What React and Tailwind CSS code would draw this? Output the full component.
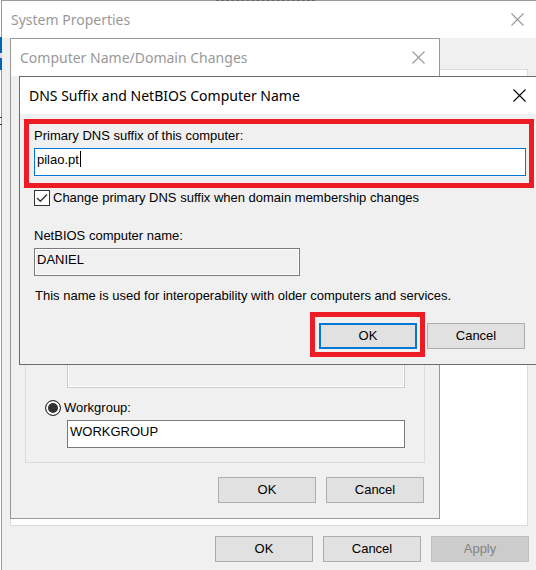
import React from "react";

const uiFont = "font-['Liberation_Sans',Arial,sans-serif]";

function CloseButton({ className = "" }) {
  return (
    <button type="button" aria-label="Close" className={`flex size-4 items-center justify-center ${className}`}>
      <svg width="13" height="13" viewBox="0 0 13 13" fill="none" stroke="currentColor" strokeWidth="1.1">
        <path d="M0.5 0.5 12.5 12.5M12.5 0.5 0.5 12.5" />
      </svg>
    </button>
  );
}

function TitleBar({ title, className = "" }) {
  return (
    <header className={`flex h-[37px] shrink-0 items-center justify-between bg-white pl-[9px] font-['Noto_Sans','Open_Sans',sans-serif] text-[14px] ${className}`}>
      <h2 className="whitespace-nowrap">{title}</h2>
      <CloseButton />
    </header>
  );
}

function DialogButton({ children, className = "border border-[#adadad] bg-[#e1e1e1]", disabled = false }) {
  return (
    <button type="button" disabled={disabled} className={`h-[26px] w-[98px] shrink-0 ${className}`}>
      {children}
    </button>
  );
}

function ComputerNameDialog() {
  return (
    <section className="absolute top-[38px] left-[10px] flex h-[481px] w-[430px] flex-col border border-[#999999] bg-[#f0f0f0]">
      <TitleBar title="Computer Name/Domain Changes" className="pr-[13px] text-[#999999]" />
      <div className="flex grow flex-col px-[14px] pb-[15px]">
        <fieldset className="flex grow flex-col justify-end border border-t-0 border-[#dcdcdc] px-[19px] pb-[14px]">
          <input disabled aria-label="Domain" className="ml-[22px] h-7 border border-[#cccccc] bg-[#f0f0f0] shadow-[inset_0_0_0_1px_#ffffff]" />
          <label className="mt-3 flex h-4 items-center gap-[3px]">
            <input
              type="radio"
              name="member"
              defaultChecked
              className="size-4 appearance-none rounded-full border border-[#333333] bg-[#333333] shadow-[inset_0_0_0_2px_#ffffff]"
            />
            Workgroup:
          </label>
          <input
            aria-label="Workgroup name"
            defaultValue="WORKGROUP"
            className="mt-1 ml-[22px] h-7 border border-[#7a7a7a] bg-white px-[2px] pb-[5px]"
          />
        </fieldset>
        <div className="mt-[14px] flex justify-end gap-[10px] pr-px">
          <DialogButton>OK</DialogButton>
          <DialogButton>Cancel</DialogButton>
        </div>
      </div>
    </section>
  );
}

function DnsSuffixDialog() {
  return (
    <section className="absolute top-[76px] right-0 left-[19px] border border-r-0 border-[#6b6b6b] bg-[#f0f0f0]">
      <TitleBar title="DNS Suffix and NetBIOS Computer Name" className="pr-[9px] text-black" />
      <div className="flex flex-col pt-[5px] pr-[2px] pb-[7px] pl-1">
        <div className="flex flex-col border-[5px] border-[#ed1c24] pt-1 pr-[3px] pb-[7px] pl-[5px]">
          <label htmlFor="suffix" className="h-5 leading-4">
            Primary DNS suffix of this computer:
          </label>
          <div className="relative flex h-7">
            <input id="suffix" defaultValue="pilao.pt" className="w-full border border-[#0078d7] bg-white px-[2px] pb-[5px]" />
            <span className="absolute top-[3px] left-[46px] h-4 w-px bg-black" />
          </div>
        </div>
        <label className="mt-[2px] ml-[10px] flex h-4 items-center gap-[3px] self-start">
          <span className="relative flex">
            <input type="checkbox" defaultChecked className="size-4 appearance-none border border-[#333333] bg-white" />
            <svg className="pointer-events-none absolute inset-0" width="16" height="16" viewBox="0 0 16 16" fill="none" stroke="#333333" strokeWidth="1.4">
              <path d="M3 8 6.3 11.3 13 4.6" />
            </svg>
          </span>
          Change primary DNS suffix when domain membership changes
        </label>
        <div className="ml-[10px] flex flex-col items-start pt-5">
          <label htmlFor="netbios" className="h-[22px] leading-5">
            NetBIOS computer name:
          </label>
          <input
            id="netbios"
            readOnly
            defaultValue="DANIEL"
            className="h-7 w-[266px] border border-[#7a7a7a] bg-[#f0f0f0] px-[2px] pb-[5px] shadow-[inset_0_0_0_1px_#ffffff]"
          />
          <p className="mt-[10px] h-[26px] pl-px leading-5">This name is used for interoperability with older computers and services.</p>
        </div>
        <div className="flex items-start justify-end gap-[2px] pr-[9px]">
          <div className="flex border-[5px] border-[#ed1c24] pt-[6px] pr-[3px] pb-[3px] pl-1">
            <DialogButton className="border-2 border-[#0078d7] bg-[#e1e1e1]">OK</DialogButton>
          </div>
          <div className="flex pt-[11px]">
            <DialogButton>Cancel</DialogButton>
          </div>
        </div>
      </div>
    </section>
  );
}

export default function App() {
  return (
    <main className={`relative flex min-h-screen overflow-hidden bg-white text-[13px] text-black ${uiFont}`}>
      <div className="relative z-10 w-px shrink-0 pt-[37px]">
        <div className="h-[33px] w-[2px] bg-[#0067b8] pt-4">
          <div className="h-[5px] bg-[#e5d5ee]" />
        </div>
        <div className="mt-[47px] h-2 w-[2px] border-y border-[#333333]" />
      </div>
      <section className="flex grow flex-col border-t border-l border-[#999999] bg-[#f0f0f0]">
        <TitleBar title="System Properties" className="pr-[11px] text-[#999999]" />
        <div className="mt-[31px] mr-2 ml-2 grow border border-[#dcdcdc] bg-white" />
        <div className="flex justify-end gap-[10px] pt-[10px] pr-[7px] pb-2">
          <DialogButton>OK</DialogButton>
          <DialogButton>Cancel</DialogButton>
          <DialogButton disabled className="border border-[#bfbfbf] bg-[#cccccc] text-[#838383]">
            Apply
          </DialogButton>
        </div>
      </section>
      <div className="absolute top-0 left-[216px] w-[99px] border-t border-dashed border-[#666666]" />
      <ComputerNameDialog />
      <DnsSuffixDialog />
    </main>
  );
}
